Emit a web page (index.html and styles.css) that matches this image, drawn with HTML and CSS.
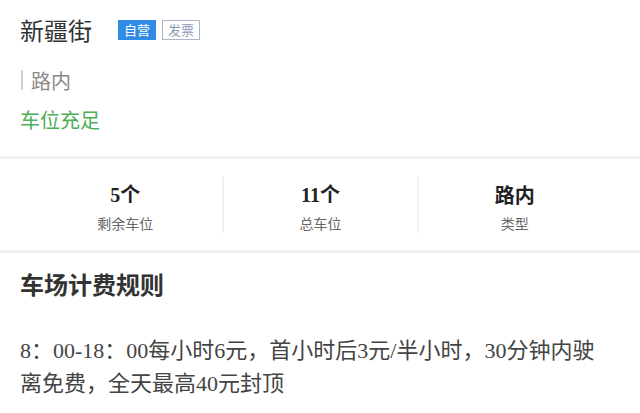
FILE: index.html
```html
<!DOCTYPE html>
<html lang="zh-CN">
<head>
  <meta charset="UTF-8">
  <meta name="viewport" content="width=device-width, initial-scale=1.0">
  <title>新疆街</title>
  <link rel="stylesheet" href="styles.css">
</head>
<body>
  <div class="cabecera">
    <div class="titulo">
      <h1>新疆街</h1>
      <span class="tag tag-azul">自营</span>
      <span class="tag tag-borde">发票</span>
    </div>
    <div class="tipo"><span class="barra"></span>路内</div>
    <div class="estado">车位充足</div>
  </div>

  <div class="datos">
    <div class="dato">
      <div class="numero">5个</div>
      <div class="etiqueta">剩余车位</div>
    </div>
    <div class="dato">
      <div class="numero">11个</div>
      <div class="etiqueta">总车位</div>
    </div>
    <div class="dato">
      <div class="numero numero-texto">路内</div>
      <div class="etiqueta">类型</div>
    </div>
  </div>

  <div class="reglas">
    <h2>车场计费规则</h2>
    <p>8：00-18：00每小时6元，首小时后3元/半小时，30分钟内驶离免费，全天最高40元封顶</p>
  </div>
</body>
</html>
```

FILE: styles.css
```css
body {
  margin: 0;
  background-color: #ffffff;
  font-family: "Liberation Serif", "Noto Sans CJK SC", serif;
  color: #333;
}
.cabecera {
  padding: 14px 20px 22px;
  border-bottom: 3px solid #f2f2f2;
}
.titulo {
  display: flex;
  align-items: center;
  height: 32px;
}
.titulo h1 {
  margin: 0 26px 0 0;
  font-family: "Noto Sans CJK SC", sans-serif;
  font-size: 24px;
  font-weight: normal;
  line-height: 32px;
  color: #333;
}
.tag {
  font-family: "Noto Sans CJK SC", sans-serif;
  font-size: 13px;
  line-height: 18px;
  padding: 0 5px;
  margin-right: 6px;
  border: 1px solid transparent;
}
.tag-azul {
  background-color: #2f8be6;
  border-color: #2f8be6;
  color: #ffffff;
}
.tag-borde {
  border-color: #a9b4c8;
  color: #8d9bb6;
}
.tipo {
  display: flex;
  align-items: center;
  margin-top: 20px;
  height: 28px;
  font-family: "Noto Sans CJK SC", sans-serif;
  font-size: 20px;
  color: #888;
}
.barra {
  width: 2px;
  height: 20px;
  background-color: #cfcfcf;
  margin: 0 8px 0 1px;
}
.estado {
  margin-top: 12px;
  line-height: 28px;
  font-family: "Noto Sans CJK SC", sans-serif;
  font-size: 20px;
  color: #4caf58;
}
.datos {
  display: grid;
  grid-template-columns: 1fr 1fr 1fr;
  padding: 18px 29px 17px 28px;
  border-bottom: 3px solid #f2f2f2;
}
.dato {
  height: 56px;
  padding-top: 5px;
  box-sizing: border-box;
  text-align: center;
  border-left: 2px solid #f0f0f0;
}
.dato:first-child {
  border-left: none;
}
.numero {
  font-size: 20px;
  font-weight: bold;
  line-height: 26px;
  color: #222;
}
.numero-texto {
  font-family: "Noto Sans CJK SC", sans-serif;
}
.etiqueta {
  margin-top: 5px;
  font-family: "Noto Sans CJK SC", sans-serif;
  font-size: 14px;
  line-height: 20px;
  color: #666;
}
.reglas {
  padding: 15px 20px 0;
}
.reglas h2 {
  margin: 0;
  font-family: "Noto Sans CJK SC", sans-serif;
  font-size: 24px;
  font-weight: bold;
  line-height: 32px;
  color: #333;
}
.reglas p {
  margin: 34px 0 0;
  padding-right: 14px;
  font-size: 22px;
  line-height: 33px;
  color: #444;
}
```
